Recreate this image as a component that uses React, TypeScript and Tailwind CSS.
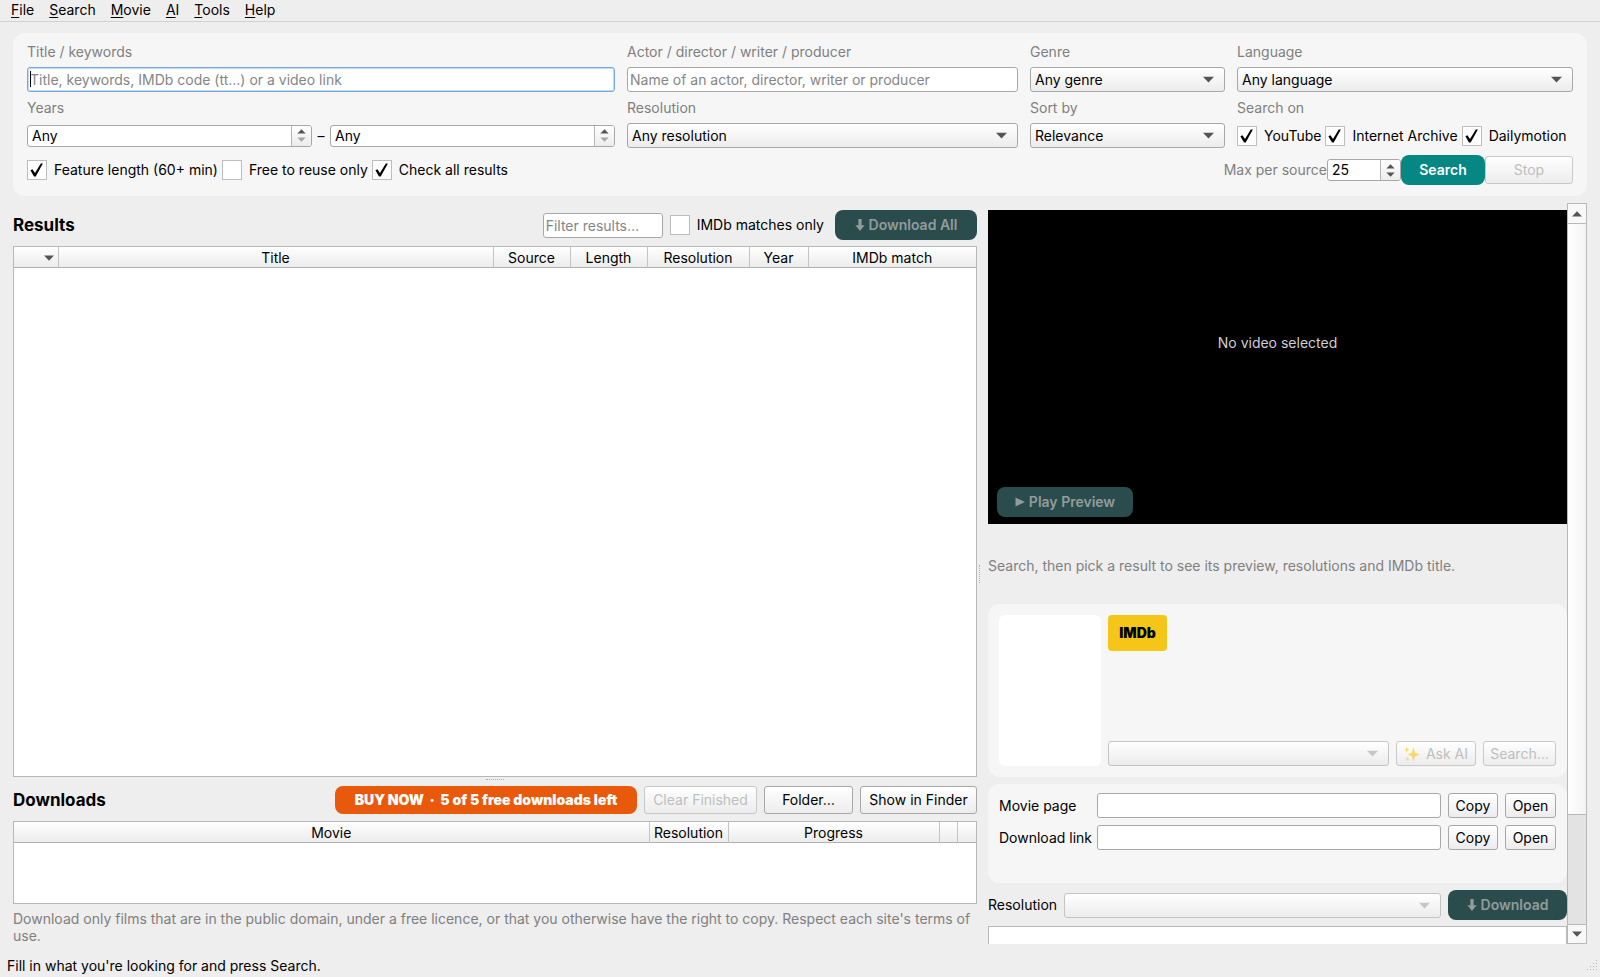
import { useState, type ReactNode } from "react";
import { cx } from "class-variance-authority";

const menus = ["File", "Search", "Movie", "AI", "Tools", "Help"];

const resultColumns = [
  { title: "", width: "w-[44px]" },
  { title: "Title", width: "" },
  { title: "Source", width: "w-[77px]" },
  { title: "Length", width: "w-[77px]" },
  { title: "Resolution", width: "w-[102px]" },
  { title: "Year", width: "w-[59px]" },
  { title: "IMDb match", width: "w-[168px]" },
];

const downloadColumns = [
  { title: "Movie", width: "" },
  { title: "Resolution", width: "w-[79px]" },
  { title: "Progress", width: "w-[211px]" },
  { title: "", width: "w-[18px]" },
  { title: "", width: "w-[19px]" },
];

const gradient = "bg-linear-to-b from-white to-[#ececec]";

const Triangle = ({ up, className }: { up?: boolean; className?: string }) => (
  <svg viewBox="0 0 10 6" className={cx("pointer-events-none", className)} fill="currentColor" aria-hidden="true">
    <path d={up ? "M0 5.5 5 0.3 10 5.5Z" : "M0 0.5 5 5.7 10 0.5Z"} />
  </svg>
);

const DownArrow = () => (
  <svg viewBox="0 0 10 14" className="h-[14px] w-[10px]" fill="currentColor" aria-hidden="true">
    <path d="M3.4 1h3.2v6.2h3L5 13 .4 7.2h3z" />
  </svg>
);

const Sparkles = () => (
  <svg viewBox="0 0 16 16" className="size-4" fill="#fbd76c" aria-hidden="true">
    <path d="M9.5 1.500 11.200 6.800 15.800 8.500 11.200 10.200 9.500 15.500 7.800 10.200 3.500 8.500 7.800 6.800z" />
    <path d="M2.800.8l.8 2.200 2 .8-2 .8-.8 2.200L2 4.600l-2-.8L2 3zM3.500 10.500l.6 1.700 1.500.6-1.500.6-.6 1.800-.6-1.800-1.500-.6 1.500-.6z" />
  </svg>
);

const Field = ({ id, label, children }: { id: string; label: string; children: ReactNode }) => (
  <div className="flex min-w-0 flex-col">
    <label htmlFor={id} className="h-6 leading-[18px] text-[#808080]">
      {label}
    </label>
    <div className="flex h-[25px] items-center">{children}</div>
  </div>
);

const Select = ({ id, options = [], disabled, label }: { id: string; options?: string[]; disabled?: boolean; label?: string }) => (
  <div className="relative h-[25px] min-w-0 flex-1">
    <select
      id={id}
      aria-label={label}
      disabled={disabled}
      className={cx(
        "block h-full w-full appearance-none rounded-[3px] border px-1",
        gradient,
        disabled ? "border-[#c4c4c4]" : "border-[#a8a8a8]",
      )}
    >
      {options.map((option) => (
        <option key={option}>{option}</option>
      ))}
    </select>
    <Triangle
      className={cx("absolute top-[9px] right-[11px] h-[7px] w-[11px]", disabled ? "text-[#c6c6c6]" : "text-[#555]")}
    />
  </div>
);

const TextBox = ({ id, placeholder, focused }: { id: string; placeholder?: string; focused?: boolean }) => (
  <div className="relative h-[25px] min-w-0 flex-1">
    <input
      id={id}
      type="text"
      placeholder={placeholder}
      className={cx(
        "block h-full w-full rounded-[3px] border bg-white px-[2px] outline-none placeholder:text-[#858585]",
        focused ? "border-[#74a7dc] ring-1 ring-[#c3dcf5] ring-inset" : "border-[#a8a8a8]",
      )}
    />
    {focused && <span className="absolute top-1 left-[3px] h-4 w-px bg-black" />}
  </div>
);

const Spin = ({ id, value, label, min, className }: { id: string; value: string; label?: string; min?: boolean; className?: string }) => (
  <div className={cx("flex h-[22px] min-w-0 overflow-hidden rounded-[3px] border border-[#a8a8a8] bg-white", className)}>
    <input id={id} type="text" aria-label={label} defaultValue={value} className="w-full min-w-0 flex-1 px-1 outline-none" />
    <div className={cx("flex w-5 shrink-0 flex-col border-l border-[#b4b4b4]", gradient)}>
      <button type="button" aria-label="Increase" className="flex flex-1 items-end justify-center pb-px text-[#555]">
        <Triangle up className="h-[5px] w-[9px]" />
      </button>
      <button
        type="button"
        aria-label="Decrease"
        className={cx("flex flex-1 items-start justify-center pt-[2px]", min ? "text-[#a5a5a5]" : "text-[#555]")}
      >
        <Triangle className="h-[5px] w-[9px]" />
      </button>
    </div>
  </div>
);

const Check = ({ label, initial = false }: { label: string; initial?: boolean }) => {
  const [checked, setChecked] = useState(initial);

  return (
    <label className="flex items-center gap-[7px] whitespace-nowrap">
      <span className="relative block size-5 shrink-0">
        <input
          type="checkbox"
          checked={checked}
          onChange={() => setChecked(!checked)}
          className="block size-5 appearance-none border border-[#bdbdbd] bg-white"
        />
        {checked && (
          <svg viewBox="0 0 20 20" className="pointer-events-none absolute inset-0 size-5" aria-hidden="true">
            <path d="M3.400 10.200 5.400 9.200 8 13 13.800 3.600 15.900 3.600 8.700 16.600 7 16.600Z" />
          </svg>
        )}
      </span>
      {label}
    </label>
  );
};

const Button = ({ children, disabled, className }: { children: ReactNode; disabled?: boolean; className?: string }) => (
  <button
    type="button"
    disabled={disabled}
    className={cx(
      "flex shrink-0 items-center justify-center rounded-[3px] border whitespace-nowrap",
      gradient,
      disabled ? "border-[#c8c8c8] text-[#bebebe]" : "border-[#a8a8a8]",
      className,
    )}
  >
    {children}
  </button>
);

const DarkButton = ({ children, className }: { children: ReactNode; className?: string }) => (
  <button
    type="button"
    disabled
    className={cx(
      "flex h-[30px] shrink-0 items-center justify-center gap-1 rounded-lg bg-[#2b4c4c] font-semibold whitespace-nowrap text-[#929c9c]",
      className,
    )}
  >
    {children}
  </button>
);

const Table = ({ columns, sorted, label }: { columns: typeof resultColumns; sorted?: boolean; label: string }) => (
  <table aria-label={label} className="w-full table-fixed border-collapse">
    <thead>
      <tr className={cx("h-5 border-b border-[#b0b0b0]", gradient)}>
        {columns.map((column, index) => (
          <th
            key={index}
            className={cx("border-r border-[#c4c4c4] p-0 pt-px leading-[19px] font-normal last:border-r-0", column.width)}
          >
            {sorted && index === 0 ? <Triangle className="mr-1 ml-auto h-[6px] w-[10px] text-[#555]" /> : column.title}
          </th>
        ))}
      </tr>
    </thead>
    <tbody />
  </table>
);

const LinkRow = ({ id, label }: { id: string; label: string }) => (
  <div className="flex items-center gap-[7px]">
    <label htmlFor={id} className="w-[91px] shrink-0 whitespace-nowrap">
      {label}
    </label>
    <TextBox id={id} />
    <Button className="h-[25px] w-[50px]">Copy</Button>
    <Button className="h-[25px] w-[51px]">Open</Button>
  </div>
);

const SearchPanel = () => (
  <section className="rounded-xl bg-[#f6f6f6] px-[14px] pt-[10px] pb-[11px]">
    <div className="grid grid-cols-[588fr_391fr_195fr_336fr] gap-x-3 gap-y-[7px]">
      <Field id="title" label="Title / keywords">
        <TextBox id="title" placeholder="Title, keywords, IMDb code (tt…) or a video link" focused />
      </Field>
      <Field id="person" label="Actor / director / writer / producer">
        <TextBox id="person" placeholder="Name of an actor, director, writer or producer" />
      </Field>
      <Field id="genre" label="Genre">
        <Select id="genre" options={["Any genre"]} />
      </Field>
      <Field id="language" label="Language">
        <Select id="language" options={["Any language"]} />
      </Field>
      <Field id="year-from" label="Years">
        <Spin id="year-from" value="Any" min className="flex-1" />
        <span className="w-[18px] text-center">–</span>
        <Spin id="year-to" label="Last year" value="Any" min className="flex-1" />
      </Field>
      <Field id="resolution" label="Resolution">
        <Select id="resolution" options={["Any resolution"]} />
      </Field>
      <Field id="sort" label="Sort by">
        <Select id="sort" options={["Relevance"]} />
      </Field>
      <div role="group" aria-label="Search on" className="min-w-0">
        <p className="h-6 leading-[18px] text-[#808080]">Search on</p>
        <div className="flex h-[25px] items-center gap-1">
          <Check label="YouTube" initial />
          <Check label="Internet Archive" initial />
          <Check label="Dailymotion" initial />
        </div>
      </div>
    </div>
    <div className="mt-[7px] flex h-[30px] items-center gap-1">
      <Check label="Feature length (60+ min)" initial />
      <Check label="Free to reuse only" />
      <Check label="Check all results" initial />
      <div className="ml-auto flex items-center">
        <label htmlFor="max" className="text-[#808080]">
          Max per source
        </label>
        <Spin id="max" value="25" className="w-[74px]" />
        <button type="button" className="h-[30px] w-[84px] rounded-lg bg-[#078783] font-semibold text-white">
          Search
        </button>
        <Button disabled className="h-7 w-[88px]">
          Stop
        </Button>
      </div>
    </div>
  </section>
);

const Results = () => (
  <section className="flex min-h-0 flex-1 flex-col gap-[6px]">
    <div className="flex h-[30px] shrink-0 items-center">
      <h2 className="mr-auto text-[17px] font-bold">Results</h2>
      <div className="flex w-[120px]">
        <input
          type="text"
          aria-label="Filter results"
          placeholder="Filter results…"
          className="h-[25px] w-full rounded-[3px] border border-[#a8a8a8] bg-white px-[2px] placeholder:text-[#858585]"
        />
      </div>
      <div className="mr-[11px] ml-[7px]">
        <Check label="IMDb matches only" />
      </div>
      <DarkButton className="w-[142px]">
        <DownArrow />
        Download All
      </DarkButton>
    </div>
    <div className="min-h-0 flex-1 border border-[#b8b8b8] bg-white">
      <Table columns={resultColumns} sorted label="Results" />
    </div>
  </section>
);

const Downloads = () => (
  <section>
    <div className="flex h-7 items-center gap-[7px]">
      <h2 className="mr-auto text-[17px] font-bold">Downloads</h2>
      <button type="button" className="h-7 w-[302px] rounded-lg bg-[#e8590c] font-black whitespace-pre text-white">
        {"BUY NOW  ·  5 of 5 free downloads left"}
      </button>
      <Button disabled className="h-7 w-[113px]">
        Clear Finished
      </Button>
      <Button className="h-7 w-[89px]">Folder…</Button>
      <Button className="h-7 w-[117px]">Show in Finder</Button>
    </div>
    <div className="mt-[7px] h-[83px] border border-[#b8b8b8] bg-white">
      <Table columns={downloadColumns} label="Downloads" />
    </div>
    <p className="mt-[6px] h-[34px] leading-[17px] text-[#808080]">
      Download only films that are in the public domain, under a free licence, or that you otherwise have the right to
      copy. Respect each site's terms of use.
    </p>
  </section>
);

const Details = () => (
  <div className="flex min-w-0 flex-1 flex-col overflow-hidden pt-[7px]">
    <div className="flex h-[314px] shrink-0 flex-col bg-black px-[9px] pb-[7px]">
      <p className="flex flex-1 items-center justify-center pb-3 text-[#cfcfcf]">No video selected</p>
      <DarkButton className="w-[136px]">
        <svg viewBox="0 0 10 10" className="size-[10px]" fill="currentColor" aria-hidden="true">
          <path d="M.5.500 10 5 .5 9.500z" />
        </svg>
        Play Preview
      </DarkButton>
    </div>
    <p className="flex h-20 shrink-0 items-center pt-1 text-[#808080]">
      Search, then pick a result to see its preview, resolutions and IMDb title.
    </p>
    <section className="flex h-[173px] shrink-0 gap-[7px] rounded-xl bg-[#f6f6f6] p-[11px]">
      <div className="w-[102px] shrink-0 rounded-md bg-white" />
      <div className="flex min-w-0 flex-1 flex-col justify-between">
        <button type="button" className="h-9 w-[59px] rounded-[4px] bg-[#f5c518] font-black">
          IMDb
        </button>
        <div className="flex gap-[7px]">
          <Select id="match" label="IMDb match" disabled />
          <Button disabled className="h-[25px] w-20 gap-[6px]">
            <Sparkles />
            Ask AI
          </Button>
          <Button disabled className="h-[25px] w-[73px]">
            Search…
          </Button>
        </div>
      </div>
    </section>
    <section className="mt-[7px] flex h-[99px] shrink-0 flex-col gap-[7px] rounded-xl bg-[#f6f6f6] px-[11px] pt-[9px]">
      <LinkRow id="movie-page" label="Movie page" />
      <LinkRow id="download-link" label="Download link" />
    </section>
    <div className="mt-[7px] flex shrink-0 items-center gap-[7px]">
      <label htmlFor="download-resolution">Resolution</label>
      <Select id="download-resolution" disabled />
      <DarkButton className="w-[119px]">
        <DownArrow />
        Download
      </DarkButton>
    </div>
    <div className="mt-[6px] min-h-0 flex-1 border border-b-0 border-[#b8b8b8] bg-white" />
  </div>
);

const ScrollBar = () => (
  <div className="flex w-5 shrink-0 flex-col border border-[#b8b8b8] bg-[#e3e3e3]">
    <button type="button" aria-label="Scroll up" className="flex h-[19px] items-center justify-center bg-[#f8f8f8] text-[#555]">
      <Triangle up className="h-[6px] w-[10px]" />
    </button>
    <div className="flex flex-1 flex-col">
      <div className="flex-[593] border-y border-[#b8b8b8] bg-linear-to-r from-white to-[#f3f3f3]" />
      <div className="flex-[110]" />
    </div>
    <button
      type="button"
      aria-label="Scroll down"
      className="flex h-[19px] items-center justify-center border-t border-[#b8b8b8] bg-[#f8f8f8] text-[#555]"
    >
      <Triangle className="h-[6px] w-[10px]" />
    </button>
  </div>
);

const App = () => {
  return (
    <div className="flex h-screen flex-col overflow-hidden bg-[#eee] font-['Inter',sans-serif] text-[14px] leading-4 text-black">
      <nav className="flex h-[22px] shrink-0 gap-[15px] border-b border-[#d2d2d2] px-[11px] pb-[2px]">
        {menus.map((menu) => (
          <button type="button" key={menu}>
            <span className="underline underline-offset-2">{menu[0]}</span>
            {menu.slice(1)}
          </button>
        ))}
      </nav>
      <main className="flex min-h-0 flex-1 flex-col gap-[7px] px-[13px] pt-[11px]">
        <SearchPanel />
        <div className="flex min-h-0 flex-1">
          <div className="flex min-w-0 flex-[964] flex-col pt-[7px]">
            <Results />
            <div className="flex h-[9px] shrink-0 justify-center pt-[2px]">
              <div className="h-px w-[18px] border-t border-dotted border-[#b0b0b0]" />
            </div>
            <Downloads />
          </div>
          <div className="flex w-[11px] shrink-0 items-center pl-[2px]">
            <div className="h-[18px] w-px border-l border-dotted border-[#b0b0b0]" />
          </div>
          <div className="flex min-w-0 flex-[599]">
            <Details />
            <ScrollBar />
          </div>
        </div>
      </main>
      <footer className="flex h-[33px] shrink-0 items-center justify-between pt-[11px] pl-[7px]">
        <p>Fill in what you're looking for and press Search.</p>
        <svg viewBox="0 0 14 14" className="size-[14px]" fill="#b8b8b8" aria-hidden="true">
          <path d="M10 1h1v1h-1zM7 4h1v1H7zM10 4h1v1h-1zM4 7h1v1H4zM7 7h1v1H7zM10 7h1v1h-1zM1 10h1v1H1zM4 10h1v1H4zM7 10h1v1H7zM10 10h1v1h-1z" />
        </svg>
      </footer>
    </div>
  );
};

export default App;
